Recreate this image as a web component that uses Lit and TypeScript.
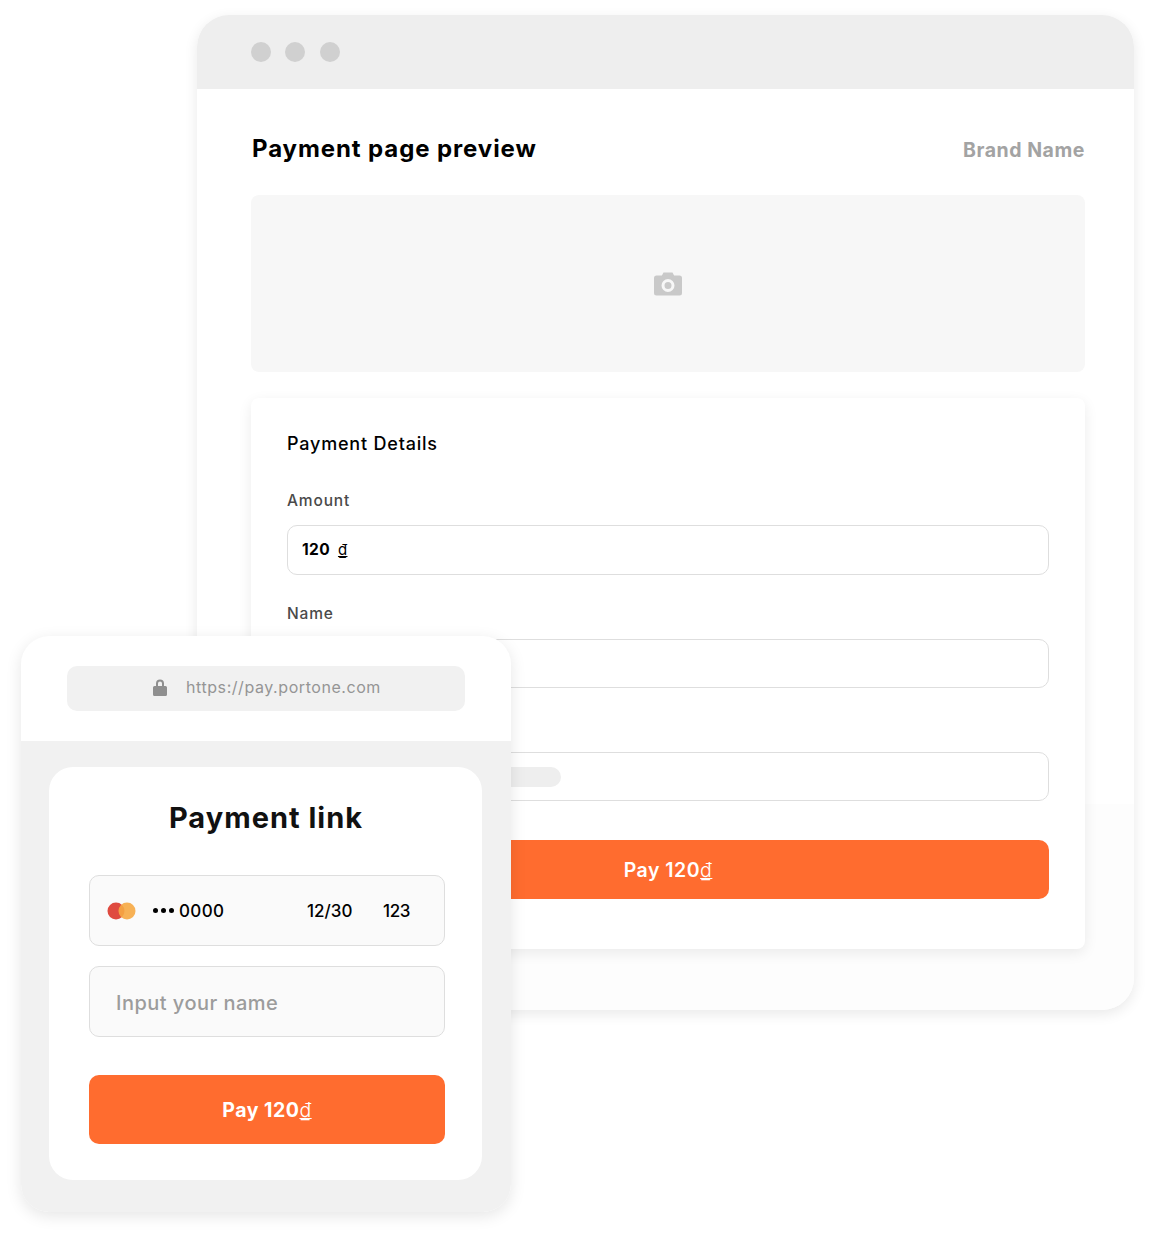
import { LitElement, html, css } from "lit";
import { customElement } from "lit/decorators.js";

@customElement("app-root")
export class AppRoot extends LitElement {
  static styles = css`
    :host { display: block; position: relative; width: 1153px; height: 1237px; background: #fff; overflow: hidden; font-family: Inter, "Liberation Sans", sans-serif; color: #000; }
    * { box-sizing: border-box; }
    .desktop { position: absolute; left: 197px; top: 15px; width: 937px; height: 995px; border-radius: 32px; overflow: hidden; display: flex; flex-direction: column; background: linear-gradient(#fff 0 789px, #fdfdfd 789px); }
    .desktop-shadow { position: absolute; left: 197px; top: 15px; width: 937px; height: 995px; border-radius: 32px; box-shadow: 0 4px 14px rgba(0,0,0,.09); }
    .chrome { height: 74px; flex: none; background: #eee; display: flex; align-items: center; gap: 14.4px; padding: 0 0 0 54px; }
    .dot { width: 20px; height: 20px; border-radius: 50%; background: #d0d0d0; }
    .content { padding: 40px 49px 0 54px; display: flex; flex-direction: column; }
    .head { display: flex; justify-content: space-between; align-items: center; height: 40px; }
    .head h1 { margin: 0 0 0 1px; font-size: 24px; font-weight: 700; line-height: 40px; letter-spacing: .9px; }
    .brand { font-size: 19.5px; font-weight: 700; color: #a3a3a3; letter-spacing: .55px; padding: 1px 0 0 0; }
    .hero { margin-top: 26px; height: 177px; background: #f7f7f7; border-radius: 8px; display: flex; align-items: center; justify-content: center; }
    .hero svg { display: block; margin-top: 1px; }
    .card { margin-top: 26px; height: 551px; background: #fff; border-radius: 8px; box-shadow: 0 4px 14px rgba(0,0,0,.08); padding: 35px 36px 0; display: flex; flex-direction: column; }
    .card h2 { margin: 0; font-size: 18px; font-weight: 500; line-height: 22px; letter-spacing: .8px; }
    .label { font-size: 15.5px; font-weight: 500; color: #4a4a4a; line-height: 20px; letter-spacing: .85px; }
    .label.first { margin-top: 36px; }
    .label.next { margin-top: 29px; }
    .field { margin-top: 15px; height: 49px; border: 1.5px solid #dedede; border-radius: 10px; padding: 0 14px; display: flex; align-items: center; font-size: 15.5px; font-weight: 700; }
    .field.top { margin-top: 14px; height: 50px; padding-bottom: 2px; letter-spacing: .35px; }
    .field .cur { font-weight: 400; margin-left: 8px; text-decoration: underline; font-size: 15px; }
    .pill { width: 210px; height: 20px; border-radius: 10px; background: #eee; margin-left: auto; margin-right: 473px; }
    .pay { margin-top: 39px; height: 59px; border-radius: 10px; background: #ff6c2f; color: #fff; font-size: 19.5px; font-weight: 600; letter-spacing: .5px; display: flex; align-items: center; justify-content: center; }
    .pay .d { font-weight: 300; text-decoration: underline; }
    .phone { position: absolute; left: 21px; top: 636px; width: 490px; height: 576px; border-radius: 28px; overflow: hidden; background: #f1f1f1; display: flex; flex-direction: column; }
    .phone-shadow { position: absolute; left: 21px; top: 636px; width: 490px; height: 576px; border-radius: 28px; box-shadow: 0 4px 16px rgba(0,0,0,.1); }
    .bar { flex: none; height: 105px; background: #fff; padding: 30px 46px 0; }
    .url { height: 45px; width: 398px; border-radius: 10px; background: #f1f1f1; display: flex; align-items: center; justify-content: center; gap: 19px; padding: 0 0 3px 2px; font-size: 16px; font-weight: 400; color: #959595; letter-spacing: .56px; }
    .phone-body { padding: 26px 29px 0 28px; }
    .panel { height: 413px; background: #fff; border-radius: 24px; padding: 0 37px 0 40px; display: flex; flex-direction: column; }
    .panel h2 { margin: 34px 0 0 -2px; text-align: center; font-size: 29px; font-weight: 700; line-height: 34px; color: #111; letter-spacing: 1px; }
    .inp { height: 71px; border: 1.5px solid #dedede; border-radius: 10px; background: #fafafa; display: flex; align-items: center; }
    .inp.card-row { margin-top: 40px; padding: 0 0 0 17px; font-size: 17px; font-weight: 500; color: #000; }
    .inp.name { margin-top: 20px; padding: 2px 0 0 26px; font-size: 20px; font-weight: 500; color: #9c9c9c; letter-spacing: .47px; }
    .mc { display: block; flex: none; }
    .num { margin-left: 17px; width: 154px; display: flex; align-items: center; gap: 5px; letter-spacing: .4px; }
    .dots { display: flex; gap: 3px; }
    .dots i { display: block; width: 5px; height: 5px; border-radius: 50%; background: #000; }
    .exp { width: 76px; }
    .cvc { letter-spacing: -.4px; }
    .btn { margin-top: 38px; height: 69px; border-radius: 10px; background: #ff6c2f; color: #fff; font-size: 19.5px; font-weight: 700; letter-spacing: .5px; display: flex; align-items: center; justify-content: center; }
    .btn .d { font-weight: 300; text-decoration: underline; }
  `;

  render() {
    return html`
      <div class="desktop-shadow"></div>
      <div class="desktop">
        <div class="chrome"><span class="dot"></span><span class="dot"></span><span class="dot"></span></div>
        <div class="content">
          <div class="head"><h1>Payment page preview</h1><span class="brand">Brand Name</span></div>
          <div class="hero">
            <svg width="28" height="24" viewBox="0 0 28 24"><path fill="#c9c9c9" fill-rule="evenodd" d="M9.5 0.5h9l1.6 3H25.5a2.5 2.5 0 0 1 2.5 2.5V21a2.5 2.5 0 0 1-2.5 2.5h-23A2.5 2.5 0 0 1 0 21V6a2.5 2.5 0 0 1 2.5-2.5H7.9zM14 7a6.5 6.5 0 1 0 0 13 6.5 6.5 0 0 0 0-13zm0 3a3.5 3.5 0 1 1 0 7 3.5 3.5 0 0 1 0-7z"/></svg>
          </div>
          <div class="card">
            <h2>Payment Details</h2>
            <div class="label first">Amount</div>
            <div class="field top">120<span class="cur">₫</span></div>
            <div class="label next">Name</div>
            <div class="field"></div>
            <div class="label next">&nbsp;</div>
            <div class="field"><span class="pill"></span></div>
            <div class="pay"><span>Pay 120<span class="d">₫</span></span></div>
          </div>
        </div>
      </div>
      <div class="phone-shadow"></div>
      <div class="phone">
        <div class="bar">
          <div class="url">
            <svg width="14" height="17" viewBox="0 0 14 17"><path fill="#8f8f8f" d="M3 7V4.5a4 4 0 0 1 8 0V7h1.5A1.5 1.5 0 0 1 14 8.500V15.500A1.500 1.500 0 0 1 12.500 17h-11A1.500 1.500 0 0 1 0 15.500V8.500A1.500 1.500 0 0 1 1.500 7zm2 0h4V4.500a2 2 0 0 0-4 0z"/></svg>
            <span>https://pay.portone.com</span>
          </div>
        </div>
        <div class="phone-body">
          <div class="panel">
            <h2>Payment link</h2>
            <div class="inp card-row">
              <svg class="mc" width="29" height="18" viewBox="0 0 29 18"><circle cx="9" cy="9" r="8.500" fill="#df4a3f"/><circle cx="20" cy="9" r="8.500" fill="#f6a843" fill-opacity=".9"/></svg>
              <span class="num"><span class="dots"><i></i><i></i><i></i></span>0000</span>
              <span class="exp">12/30</span><span class="cvc">123</span>
            </div>
            <div class="inp name">Input your name</div>
            <div class="btn"><span>Pay 120<span class="d">₫</span></span></div>
          </div>
        </div>
      </div>
    `;
  }
}
